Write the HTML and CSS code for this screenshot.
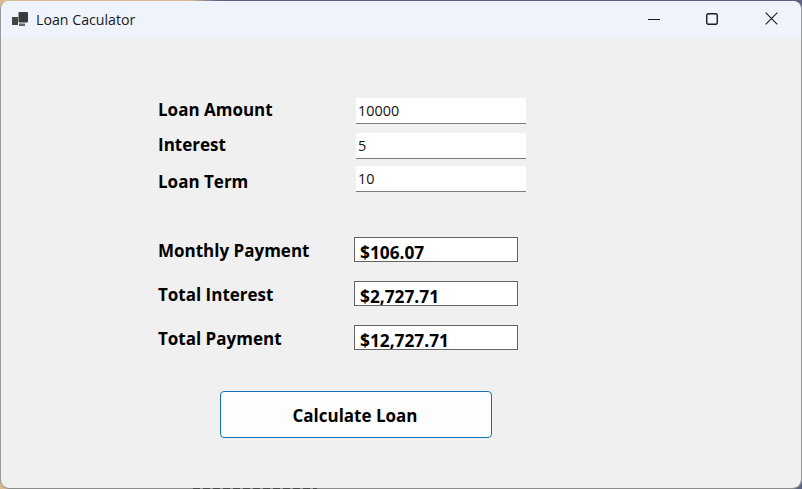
FILE: index.html
```html
<!DOCTYPE html>
<html lang="en">
<head>
<meta charset="utf-8">
<title>Loan Caculator</title>
<link rel="stylesheet" href="styles.css">
</head>
<body>
<div class="window">
  <header class="titlebar">
    <svg class="app-icon" width="16" height="15" viewBox="0 0 16 15" aria-hidden="true">
      <rect x="0" y="5" width="6" height="8" fill="#454545"/>
      <rect x="7" y="11.5" width="6" height="2.5" fill="#666"/>
      <rect x="6.5" y="0" width="9.5" height="10.5" rx="1" fill="#3a3a3a"/>
    </svg>
    <span class="title">Loan Caculator</span>
    <div class="controls">
      <svg class="ctl ctl-min" width="12" height="12" viewBox="0 0 12 12" aria-hidden="true"><path d="M0 6.5h12" stroke="#1a1a1a" stroke-width="1"/></svg>
      <svg class="ctl ctl-max" width="12" height="12" viewBox="0 0 12 12" aria-hidden="true"><rect x=".75" y=".75" width="10.5" height="10.5" rx="1.5" fill="none" stroke="#1a1a1a" stroke-width="1.4"/></svg>
      <svg class="ctl ctl-close" width="13" height="13" viewBox="0 0 13 13" aria-hidden="true"><path d="M.7.7l11.6 11.6M12.3.7L.7 12.3" stroke="#1a1a1a" stroke-width="1.1" fill="none"/></svg>
    </div>
  </header>
  <main class="client">
    <section class="inputs">
      <div class="row row-a"><label class="label">Loan Amount</label><div class="field">10000</div></div>
      <div class="row row-b"><label class="label">Interest</label><div class="field">5</div></div>
      <div class="row row-c"><label class="label">Loan Term</label><div class="field">10</div></div>
    </section>
    <section class="outputs">
      <div class="row out"><span class="label">Monthly Payment</span><div class="result">$106.07</div></div>
      <div class="row out"><span class="label">Total Interest</span><div class="result">$2,727.71</div></div>
      <div class="row out"><span class="label">Total Payment</span><div class="result">$12,727.71</div></div>
    </section>
    <button class="calc" type="button">Calculate Loan</button>
  </main>
</div>
<div class="peek"></div>
</body>
</html>
```
FILE: styles.css
```css
* { box-sizing: border-box; }
html, body { margin: 0; padding: 0; }
body {
  position: relative;
  width: 802px;
  height: 489px;
  overflow: hidden;
  background: linear-gradient(90deg, #d8bb8e 0 190px, #5d6285 218px 100%);
  font-family: "Open Sans", "Noto Sans", sans-serif;
  color: #000;
}
.window {
  width: 802px;
  height: 489px;
  display: flex;
  flex-direction: column;
  background: #f0f0f0;
  background-clip: padding-box;
  border: 1px solid #989a9e;
  border-top-color: transparent;
  border-bottom-color: #8c8c8c;
  border-radius: 9px;
  overflow: hidden;
}
.titlebar {
  flex: none;
  height: 37px;
  display: flex;
  align-items: center;
  background: #eff3fb;
  padding-left: 11px;
}
.app-icon { flex: none; margin-top: -1px; }
.title {
  margin-left: 8px;
  font-size: 14.2px;
  color: #1a1a1a;
  margin-top: -1px;
}
.controls {
  margin-left: auto;
  display: flex;
  align-items: center;
  padding-right: 23px;
  margin-top: -2px;
}
.ctl { display: block; }
.ctl-max { margin-left: 46px; }
.ctl-close { margin-left: 47px; }
.client {
  flex: 1;
  padding: 60px 0 0 157px;
}
.row { display: flex; align-items: center; height: 26px; }
.label {
  width: 198px;
  flex: none;
  font-size: 17px;
  font-weight: 700;
  line-height: 24px;
}
.row-a .label, .row-b .label { margin-top: -2px; }
.row-c .label { margin-top: 6px; }
.field {
  width: 170px;
  height: 26px;
  background: #fff;
  border-bottom: 1px solid #7a7a7a;
  font-size: 14.4px;
  line-height: 25px;
  padding-left: 2px;
  color: #111;
}
.row-b { margin-top: 9px; }
.row-c { margin-top: 7px; }
.outputs { margin-top: 45px; }
.out { height: 25px; margin-bottom: 19px; }
.out .label { width: 196px; margin-top: 2px; }
.result {
  width: 164px;
  height: 25px;
  background: #fff;
  border: 1px solid #646464;
  font-size: 17.3px;
  font-weight: 700;
  line-height: 23px;
  padding: 3px 0 0 5px;
}
.calc {
  display: block;
  width: 272px;
  height: 47px;
  margin: 41px 0 0 62px;
  background: #fdfdfd;
  border: 1px solid #1273b4;
  border-radius: 4px;
  font-family: inherit;
  font-size: 17px;
  font-weight: 700;
  color: #000;
  padding: 2px 2px 0 0;
}
.peek {
  position: absolute;
  left: 193px;
  bottom: 0;
  width: 124px;
  height: 1px;
  background: repeating-linear-gradient(90deg, #4a4a4a 0 7px, #9a9a9a 7px 10px);
}
```
